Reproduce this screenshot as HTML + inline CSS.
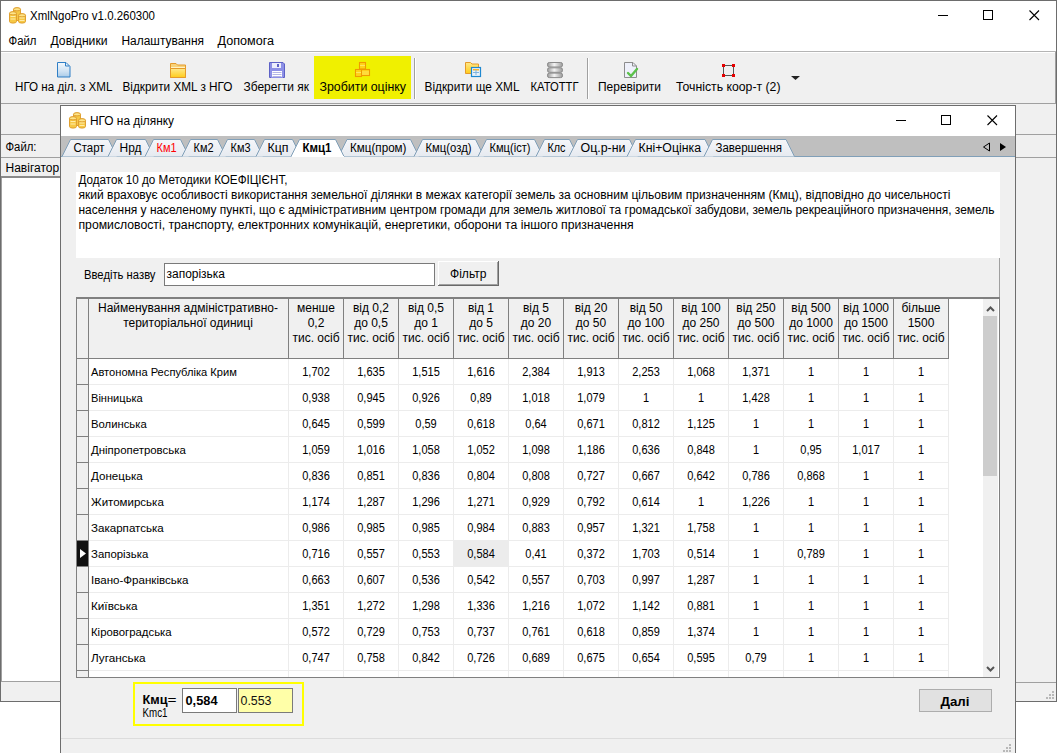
<!DOCTYPE html>
<html><head><meta charset="utf-8"><style>
html,body{margin:0;padding:0;background:#fff;width:1058px;height:753px;overflow:hidden}
svg{display:block}
text{font-family:"Liberation Sans", sans-serif;}
</style></head><body>
<svg width="1058" height="753" viewBox="0 0 1058 753" shape-rendering="crispEdges" font-family='"Liberation Sans", sans-serif'>
<rect x="0" y="0" width="1058" height="753" fill="#ffffff" />
<rect x="0" y="0" width="1057" height="702" fill="#f0f0f0" />
<rect x="0" y="0" width="1057" height="51" fill="#ffffff" />
<rect x="0" y="0" width="1057" height="1" fill="#6d6d6d" />
<rect x="0" y="0" width="1" height="702" fill="#6d6d6d" />
<rect x="1056" y="0" width="1" height="702" fill="#6d6d6d" />
<rect x="0" y="701" width="1057" height="1" fill="#6d6d6d" />
<g transform="translate(9,7)" shape-rendering="geometricPrecision"><path d="M4.5 2.5a3.5 1.6 0 0 1 7 0v11h-7z" fill="#f6c845" stroke="#e0a030"/><ellipse cx="8" cy="2.3" rx="3.5" ry="1.6" fill="#fde58a" stroke="#e0a030"/><path d="M0.5 6.5a3.5 1.6 0 0 1 7 0v8a3.5 1.6 0 0 1 -7 0z" fill="#f6c845" stroke="#e0a030"/><ellipse cx="4" cy="6.3" rx="3.5" ry="1.6" fill="#fde58a" stroke="#e0a030"/><path d="M9.5 8.5a3.5 1.6 0 0 1 7 0v6a3.5 1.6 0 0 1 -7 0z" fill="#f6c845" stroke="#e0a030"/><ellipse cx="13" cy="8.3" rx="3.5" ry="1.6" fill="#fde58a" stroke="#e0a030"/><path d="M1.5 9.5h5M1.5 12h5M10.5 11h5M10.5 13.5h5M8 5v0" stroke="#fff1b8" stroke-width="0.9"/></g>
<text x="30.00" y="20" font-size="12" textLength="125.00" lengthAdjust="spacingAndGlyphs">XmlNgoPro v1.0.260300</text>
<rect x="938" y="15" width="10" height="1" fill="#000" />
<rect x="983" y="10" width="10" height="1" fill="#000" />
<rect x="983" y="19" width="10" height="1" fill="#000" />
<rect x="983" y="10" width="1" height="10" fill="#000" />
<rect x="992" y="10" width="1" height="10" fill="#000" />
<path d="M1029.5 10.5L1039 20M1039 10.5L1029.5 20" stroke="#000" stroke-width="1.1" shape-rendering="geometricPrecision"/>
<rect x="1" y="51" width="1055" height="1" fill="#b4b4b4" />
<text x="8.50" y="45" font-size="12" textLength="28.00" lengthAdjust="spacingAndGlyphs">Файл</text>
<text x="50.50" y="45" font-size="12" textLength="57.00" lengthAdjust="spacingAndGlyphs">Довідники</text>
<text x="121.50" y="45" font-size="12" textLength="82.50" lengthAdjust="spacingAndGlyphs">Налаштування</text>
<text x="217.50" y="45" font-size="12" textLength="56.50" lengthAdjust="spacingAndGlyphs">Допомога</text>
<rect x="1" y="52" width="1055" height="51" fill="#f0f0f0" />
<rect x="1" y="52" width="1055" height="1" fill="#ffffff" />
<rect x="1" y="103" width="1055" height="1" fill="#a0a0a0" />
<rect x="1055" y="52" width="1" height="52" fill="#a0a0a0" />
<rect x="314" y="56" width="97" height="43" fill="#f0f000" />
<rect x="414" y="58" width="1" height="41" fill="#a0a0a0" />
<rect x="415" y="58" width="1" height="41" fill="#ffffff" />
<rect x="587" y="58" width="1" height="41" fill="#a0a0a0" />
<rect x="588" y="58" width="1" height="41" fill="#ffffff" />
<text x="15.00" y="91" font-size="12" textLength="97.50" lengthAdjust="spacingAndGlyphs">НГО на діл. з XML</text>
<text x="122.50" y="91" font-size="12" textLength="110.00" lengthAdjust="spacingAndGlyphs">Відкрити XML з НГО</text>
<text x="243.50" y="91" font-size="12" textLength="65.50" lengthAdjust="spacingAndGlyphs">Зберегти як</text>
<text x="319.50" y="91" font-size="12" textLength="86.50" lengthAdjust="spacingAndGlyphs">Зробити оцінку</text>
<text x="424.50" y="91" font-size="12" textLength="95.00" lengthAdjust="spacingAndGlyphs">Відкрити ще XML</text>
<text x="530.50" y="91" font-size="12" textLength="48.00" lengthAdjust="spacingAndGlyphs">КАТОТТГ</text>
<text x="598.00" y="91" font-size="12" textLength="63.00" lengthAdjust="spacingAndGlyphs">Перевірити</text>
<text x="676.00" y="91" font-size="12" textLength="104.50" lengthAdjust="spacingAndGlyphs">Точність коор-т (2)</text>
<defs><linearGradient id="gdoc" x1="0" y1="0" x2="0" y2="1"><stop offset="0" stop-color="#f4f9fd"/><stop offset="0.6" stop-color="#cfe2f3"/><stop offset="1" stop-color="#a9cbe8"/></linearGradient><linearGradient id="gfold" x1="0" y1="0" x2="0" y2="1"><stop offset="0" stop-color="#ffe98a"/><stop offset="1" stop-color="#ffcc1a"/></linearGradient><linearGradient id="gdb" x1="0" y1="0" x2="1" y2="0"><stop offset="0" stop-color="#9a9a9a"/><stop offset="0.45" stop-color="#f4f4f4"/><stop offset="1" stop-color="#9a9a9a"/></linearGradient></defs>
<g shape-rendering="geometricPrecision"><path d="M57.5 62.5h8.5l4 4v10.5h-12.5z" fill="url(#gdoc)" stroke="#2f7fc6"/><path d="M65.5 62.5v3.5h4" fill="none" stroke="#2f7fc6"/></g>
<g shape-rendering="geometricPrecision"><path d="M170.5 77.5v-14h5.5l1.5 1.5h8v12.5z" fill="#f7d27a" stroke="#e59a2a"/><path d="M170.5 77.5v-9h15v9z" fill="url(#gfold)" stroke="#e59a2a"/><path d="M171 67.5h14" stroke="#fff3c4"/></g>
<g shape-rendering="geometricPrecision"><path d="M269.5 62.5h13.5l1.5 1.5v13.5h-15z" fill="#8d90e6" stroke="#5d61c6"/><rect x="272" y="63" width="9" height="5" fill="#eceefc"/><rect x="277" y="64" width="2" height="3" fill="#5d61c6"/><rect x="271.5" y="70.5" width="11" height="7" fill="#ffffff" stroke="#8d90e6"/><path d="M272.5 72.5h9M272.5 74.5h9M272.5 76.5h9" stroke="#b4b6e6"/></g>
<g shape-rendering="geometricPrecision" stroke="#f09a00" stroke-width="1.1" fill="#ffd21a"><rect x="359.5" y="62.5" width="6" height="6.5"/><rect x="355.5" y="69.5" width="6" height="7"/><rect x="361.5" y="69.5" width="8" height="6"/><path d="M360 65.5h5M356 72.5h5M362 72h7M362 74h7" stroke="#ffe866" stroke-width="0.9"/></g>
<g shape-rendering="geometricPrecision"><path d="M465.5 73.5v-11h5l1.5 1.5h6.5v9.5z" fill="url(#gfold)" stroke="#e59a2a"/><rect x="471.5" y="67.5" width="9" height="9" fill="#e8f2fb" stroke="#1e88d0" stroke-width="1.2"/><rect x="473" y="69" width="6" height="1.5" fill="#f2b430"/><path d="M473 72.5h6M476 70v5" stroke="#7fb3df"/></g>
<g shape-rendering="geometricPrecision"><rect x="547.5" y="62.5" width="15" height="4.5" rx="1.8" fill="url(#gdb)" stroke="#8a8a8a"/><rect x="547.5" y="67.8" width="15" height="4.5" rx="1.8" fill="url(#gdb)" stroke="#8a8a8a"/><rect x="547.5" y="73.1" width="15" height="4.5" rx="1.8" fill="url(#gdb)" stroke="#8a8a8a"/></g>
<g shape-rendering="geometricPrecision"><path d="M624.5 62.5h8.5l3.5 3.5v11.5h-12z" fill="#eef0fa" stroke="#8c8c8c"/><path d="M632.5 62.5v3.5h4" fill="none" stroke="#8c8c8c"/><path d="M628 73l3 3l6-7" fill="none" stroke="#5cc14a" stroke-width="2.4" stroke-linecap="round"/></g>
<g><rect x="723.5" y="65.5" width="10" height="10" fill="none" stroke="#555" shape-rendering="geometricPrecision"/><rect x="722" y="64" width="3" height="3" fill="#e60000"/><rect x="732" y="64" width="3" height="3" fill="#e60000"/><rect x="722" y="74" width="3" height="3" fill="#e60000"/><rect x="732" y="74" width="3" height="3" fill="#e60000"/></g>
<path d="M791 76h9l-4.5 4z" fill="#222" shape-rendering="geometricPrecision"/>
<rect x="1" y="134" width="1055" height="1" fill="#a0a0a0" />
<rect x="1" y="157" width="1055" height="1" fill="#a0a0a0" />
<text x="5.50" y="151" font-size="12" textLength="31.00" lengthAdjust="spacingAndGlyphs">Файл:</text>
<text x="5.50" y="172" font-size="12" textLength="57.00" lengthAdjust="spacingAndGlyphs">Навігатор:</text>
<rect x="1" y="176" width="60" height="2" fill="#8a8a8a" />
<rect x="2" y="178" width="58" height="503" fill="#ffffff" />
<rect x="1" y="178" width="1" height="504" fill="#a0a0a0" />
<rect x="1" y="681" width="60" height="1" fill="#a0a0a0" />
<rect x="1016" y="682" width="40" height="1" fill="#a0a0a0" />
<rect x="60" y="105" width="956" height="648" fill="#f0f0f0" />
<rect x="61" y="106" width="954" height="30" fill="#ffffff" />
<rect x="60" y="105" width="956" height="1" fill="#6d6d6d" />
<rect x="60" y="105" width="1" height="648" fill="#6d6d6d" />
<rect x="1015" y="105" width="1" height="648" fill="#6d6d6d" />
<g transform="translate(69,112)" shape-rendering="geometricPrecision"><path d="M4.5 2.5a3.5 1.6 0 0 1 7 0v11h-7z" fill="#f6c845" stroke="#e0a030"/><ellipse cx="8" cy="2.3" rx="3.5" ry="1.6" fill="#fde58a" stroke="#e0a030"/><path d="M0.5 6.5a3.5 1.6 0 0 1 7 0v8a3.5 1.6 0 0 1 -7 0z" fill="#f6c845" stroke="#e0a030"/><ellipse cx="4" cy="6.3" rx="3.5" ry="1.6" fill="#fde58a" stroke="#e0a030"/><path d="M9.5 8.5a3.5 1.6 0 0 1 7 0v6a3.5 1.6 0 0 1 -7 0z" fill="#f6c845" stroke="#e0a030"/><ellipse cx="13" cy="8.3" rx="3.5" ry="1.6" fill="#fde58a" stroke="#e0a030"/><path d="M1.5 9.5h5M1.5 12h5M10.5 11h5M10.5 13.5h5M8 5v0" stroke="#fff1b8" stroke-width="0.9"/></g>
<text x="90.00" y="125" font-size="12" textLength="84.00" lengthAdjust="spacingAndGlyphs">НГО на ділянку</text>
<rect x="896" y="120" width="10" height="1" fill="#000" />
<rect x="941" y="115" width="10" height="1" fill="#000" />
<rect x="941" y="124" width="10" height="1" fill="#000" />
<rect x="941" y="115" width="1" height="10" fill="#000" />
<rect x="950" y="115" width="1" height="10" fill="#000" />
<path d="M987.5 115.5L997 125M997 115.5L987.5 125" stroke="#000" stroke-width="1.1" shape-rendering="geometricPrecision"/>
<defs><linearGradient id="gtab" x1="0" y1="0" x2="0" y2="1"><stop offset="0" stop-color="#f5f6f9"/><stop offset="1" stop-color="#e6eaf0"/></linearGradient></defs>
<rect x="61" y="136" width="954" height="21" fill="#bfbfbf" />
<rect x="61" y="156" width="954" height="1" fill="#809fb8" />
<path d="M62.0 156.5L70.5 139.5H108.5L117.0 156.5" fill="url(#gtab)" stroke="#809fb8" stroke-width="1" shape-rendering="geometricPrecision"/>
<path d="M108.0 156.5L116.5 139.5H145.5L154.0 156.5" fill="url(#gtab)" stroke="#809fb8" stroke-width="1" shape-rendering="geometricPrecision"/>
<path d="M145.0 156.5L153.5 139.5H180.5L189.0 156.5" fill="url(#gtab)" stroke="#809fb8" stroke-width="1" shape-rendering="geometricPrecision"/>
<path d="M182.0 156.5L190.5 139.5H217.5L226.0 156.5" fill="url(#gtab)" stroke="#809fb8" stroke-width="1" shape-rendering="geometricPrecision"/>
<path d="M219.0 156.5L227.5 139.5H254.5L263.0 156.5" fill="url(#gtab)" stroke="#809fb8" stroke-width="1" shape-rendering="geometricPrecision"/>
<path d="M256.0 156.5L264.5 139.5H292.5L301.0 156.5" fill="url(#gtab)" stroke="#809fb8" stroke-width="1" shape-rendering="geometricPrecision"/>
<path d="M338.5 156.5L347.0 139.5H410.5L419.0 156.5" fill="url(#gtab)" stroke="#809fb8" stroke-width="1" shape-rendering="geometricPrecision"/>
<path d="M414.0 156.5L422.5 139.5H475.5L484.0 156.5" fill="url(#gtab)" stroke="#809fb8" stroke-width="1" shape-rendering="geometricPrecision"/>
<path d="M478.0 156.5L486.5 139.5H534.5L543.0 156.5" fill="url(#gtab)" stroke="#809fb8" stroke-width="1" shape-rendering="geometricPrecision"/>
<path d="M536.0 156.5L544.5 139.5H569.5L578.0 156.5" fill="url(#gtab)" stroke="#809fb8" stroke-width="1" shape-rendering="geometricPrecision"/>
<path d="M569.0 156.5L577.5 139.5H629.5L638.0 156.5" fill="url(#gtab)" stroke="#809fb8" stroke-width="1" shape-rendering="geometricPrecision"/>
<path d="M627.0 156.5L635.5 139.5H705.0L713.5 156.5" fill="url(#gtab)" stroke="#809fb8" stroke-width="1" shape-rendering="geometricPrecision"/>
<path d="M704.0 156.5L712.5 139.5H786.0L794.5 156.5" fill="url(#gtab)" stroke="#809fb8" stroke-width="1" shape-rendering="geometricPrecision"/>
<path d="M291.0 156.5L299.5 139.5H335.5L344.0 156.5" fill="#ffffff" stroke="#809fb8" stroke-width="1" shape-rendering="geometricPrecision"/>
<rect x="292.0" y="156" width="52.0" height="1" fill="#ffffff" />
<text x="73.50" y="152" font-size="12" textLength="31.00" lengthAdjust="spacingAndGlyphs">Старт</text>
<text x="119.50" y="152" font-size="12" textLength="22.00" lengthAdjust="spacingAndGlyphs">Нрд</text>
<text x="156.50" y="152" font-size="12" fill="#ff0000" textLength="20.00" lengthAdjust="spacingAndGlyphs">Км1</text>
<text x="193.50" y="152" font-size="12" textLength="20.00" lengthAdjust="spacingAndGlyphs">Км2</text>
<text x="230.50" y="152" font-size="12" textLength="20.00" lengthAdjust="spacingAndGlyphs">Км3</text>
<text x="267.50" y="152" font-size="12" textLength="21.00" lengthAdjust="spacingAndGlyphs">Кцп</text>
<text x="302.50" y="152" font-size="12" font-weight="bold" textLength="29.00" lengthAdjust="spacingAndGlyphs">Кмц1</text>
<text x="350.00" y="152" font-size="12" textLength="56.50" lengthAdjust="spacingAndGlyphs">Кмц(пром)</text>
<text x="425.50" y="152" font-size="12" textLength="46.00" lengthAdjust="spacingAndGlyphs">Кмц(озд)</text>
<text x="489.50" y="152" font-size="12" textLength="41.00" lengthAdjust="spacingAndGlyphs">Кмц(іст)</text>
<text x="547.50" y="152" font-size="12" textLength="18.00" lengthAdjust="spacingAndGlyphs">Клс</text>
<text x="580.50" y="152" font-size="12" textLength="45.00" lengthAdjust="spacingAndGlyphs">Оц.р-ни</text>
<text x="638.50" y="152" font-size="12" textLength="62.50" lengthAdjust="spacingAndGlyphs">Кні+Оцінка</text>
<text x="715.50" y="152" font-size="12" textLength="66.50" lengthAdjust="spacingAndGlyphs">Завершення</text>
<path d="M983.5 147L989.5 143V151Z" fill="none" stroke="#000" shape-rendering="geometricPrecision"/>
<path d="M1000 143L1006 147L1000 151Z" fill="#000" shape-rendering="geometricPrecision"/>
<rect x="76" y="172" width="924" height="86" fill="#ffffff" />
<text x="78.50" y="184" font-size="12" textLength="209.00" lengthAdjust="spacingAndGlyphs">Додаток 10 до Методики КОЕФІЦІЄНТ,</text>
<text x="78.50" y="199" font-size="12" textLength="872.00" lengthAdjust="spacingAndGlyphs">який враховує особливості використання земельної ділянки в межах категорії земель за основним цільовим призначенням (Кмц), відповідно до чисельності</text>
<text x="78.50" y="214" font-size="12" textLength="916.00" lengthAdjust="spacingAndGlyphs">населення у населеному пункті, що є адміністративним центром громади для земель житлової та громадської забудови, земель рекреаційного призначення, земель</text>
<text x="78.50" y="229" font-size="12" textLength="555.00" lengthAdjust="spacingAndGlyphs">промисловості, транспорту, електронних комунікацій, енергетики, оборони та іншого призначення</text>
<rect x="999" y="258" width="1" height="40" fill="#a0a0a0" />
<text x="84.00" y="279" font-size="12" textLength="71.50" lengthAdjust="spacingAndGlyphs">Введіть назву</text>
<rect x="164" y="263" width="271" height="23" fill="#ffffff" />
<rect x="164" y="263" width="271" height="1" fill="#7a7a7a" />
<rect x="164" y="285" width="271" height="1" fill="#7a7a7a" />
<rect x="164" y="263" width="1" height="23" fill="#7a7a7a" />
<rect x="434" y="263" width="1" height="23" fill="#7a7a7a" />
<text x="166.50" y="278" font-size="12" textLength="58.50" lengthAdjust="spacingAndGlyphs">запорізька</text>
<rect x="438" y="261" width="61" height="25" fill="#f0f0f0" />
<rect x="438" y="261" width="61" height="1" fill="#ffffff" />
<rect x="438" y="261" width="1" height="25" fill="#ffffff" />
<rect x="438" y="285" width="61" height="1" fill="#696969" />
<rect x="498" y="261" width="1" height="25" fill="#696969" />
<rect x="439" y="284" width="59" height="1" fill="#a0a0a0" />
<rect x="497" y="262" width="1" height="23" fill="#a0a0a0" />
<text x="450.00" y="278" font-size="12" textLength="36.50" lengthAdjust="spacingAndGlyphs">Фільтр</text>
<rect x="76" y="298" width="924" height="380" fill="#ffffff" />
<rect x="77" y="299" width="871" height="59" fill="#f0f0f0" />
<rect x="88" y="299" width="1" height="59" fill="#808080" />
<rect x="288" y="299" width="1" height="59" fill="#808080" />
<rect x="343" y="299" width="1" height="59" fill="#808080" />
<rect x="398" y="299" width="1" height="59" fill="#808080" />
<rect x="453" y="299" width="1" height="59" fill="#808080" />
<rect x="508" y="299" width="1" height="59" fill="#808080" />
<rect x="563" y="299" width="1" height="59" fill="#808080" />
<rect x="618" y="299" width="1" height="59" fill="#808080" />
<rect x="673" y="299" width="1" height="59" fill="#808080" />
<rect x="728" y="299" width="1" height="59" fill="#808080" />
<rect x="783" y="299" width="1" height="59" fill="#808080" />
<rect x="838" y="299" width="1" height="59" fill="#808080" />
<rect x="893" y="299" width="1" height="59" fill="#808080" />
<rect x="948" y="299" width="1" height="59" fill="#808080" />
<rect x="77" y="358" width="872" height="1" fill="#808080" />
<rect x="76" y="297" width="924" height="2" fill="#808080" />
<rect x="76" y="298" width="1" height="380" fill="#808080" />
<rect x="999" y="298" width="1" height="380" fill="#808080" />
<rect x="76" y="677" width="924" height="1" fill="#808080" />
<text x="188.00" y="312" font-size="12" text-anchor="middle" textLength="179.93" lengthAdjust="spacingAndGlyphs">Найменування адміністративно-</text>
<text x="188.00" y="327" font-size="12" text-anchor="middle" textLength="129.67" lengthAdjust="spacingAndGlyphs">територіальної одиниці</text>
<text x="316.00" y="312" font-size="12" text-anchor="middle" textLength="37.85" lengthAdjust="spacingAndGlyphs">менше</text>
<text x="316.00" y="327" font-size="12" text-anchor="middle" textLength="16.68" lengthAdjust="spacingAndGlyphs">0,2</text>
<text x="316.00" y="342" font-size="12" text-anchor="middle" textLength="47.08" lengthAdjust="spacingAndGlyphs">тис. осіб</text>
<text x="371.00" y="312" font-size="12" text-anchor="middle" textLength="36.06" lengthAdjust="spacingAndGlyphs">від 0,2</text>
<text x="371.00" y="327" font-size="12" text-anchor="middle" textLength="33.69" lengthAdjust="spacingAndGlyphs">до 0,5</text>
<text x="371.00" y="342" font-size="12" text-anchor="middle" textLength="47.08" lengthAdjust="spacingAndGlyphs">тис. осіб</text>
<text x="426.00" y="312" font-size="12" text-anchor="middle" textLength="36.06" lengthAdjust="spacingAndGlyphs">від 0,5</text>
<text x="426.00" y="327" font-size="12" text-anchor="middle" textLength="23.68" lengthAdjust="spacingAndGlyphs">до 1</text>
<text x="426.00" y="342" font-size="12" text-anchor="middle" textLength="47.08" lengthAdjust="spacingAndGlyphs">тис. осіб</text>
<text x="481.00" y="312" font-size="12" text-anchor="middle" textLength="26.05" lengthAdjust="spacingAndGlyphs">від 1</text>
<text x="481.00" y="327" font-size="12" text-anchor="middle" textLength="23.68" lengthAdjust="spacingAndGlyphs">до 5</text>
<text x="481.00" y="342" font-size="12" text-anchor="middle" textLength="47.08" lengthAdjust="spacingAndGlyphs">тис. осіб</text>
<text x="536.00" y="312" font-size="12" text-anchor="middle" textLength="26.05" lengthAdjust="spacingAndGlyphs">від 5</text>
<text x="536.00" y="327" font-size="12" text-anchor="middle" textLength="30.36" lengthAdjust="spacingAndGlyphs">до 20</text>
<text x="536.00" y="342" font-size="12" text-anchor="middle" textLength="47.08" lengthAdjust="spacingAndGlyphs">тис. осіб</text>
<text x="591.00" y="312" font-size="12" text-anchor="middle" textLength="32.72" lengthAdjust="spacingAndGlyphs">від 20</text>
<text x="591.00" y="327" font-size="12" text-anchor="middle" textLength="30.36" lengthAdjust="spacingAndGlyphs">до 50</text>
<text x="591.00" y="342" font-size="12" text-anchor="middle" textLength="47.08" lengthAdjust="spacingAndGlyphs">тис. осіб</text>
<text x="646.00" y="312" font-size="12" text-anchor="middle" textLength="32.72" lengthAdjust="spacingAndGlyphs">від 50</text>
<text x="646.00" y="327" font-size="12" text-anchor="middle" textLength="37.03" lengthAdjust="spacingAndGlyphs">до 100</text>
<text x="646.00" y="342" font-size="12" text-anchor="middle" textLength="47.08" lengthAdjust="spacingAndGlyphs">тис. осіб</text>
<text x="701.00" y="312" font-size="12" text-anchor="middle" textLength="39.40" lengthAdjust="spacingAndGlyphs">від 100</text>
<text x="701.00" y="327" font-size="12" text-anchor="middle" textLength="37.03" lengthAdjust="spacingAndGlyphs">до 250</text>
<text x="701.00" y="342" font-size="12" text-anchor="middle" textLength="47.08" lengthAdjust="spacingAndGlyphs">тис. осіб</text>
<text x="756.00" y="312" font-size="12" text-anchor="middle" textLength="39.40" lengthAdjust="spacingAndGlyphs">від 250</text>
<text x="756.00" y="327" font-size="12" text-anchor="middle" textLength="37.03" lengthAdjust="spacingAndGlyphs">до 500</text>
<text x="756.00" y="342" font-size="12" text-anchor="middle" textLength="47.08" lengthAdjust="spacingAndGlyphs">тис. осіб</text>
<text x="811.00" y="312" font-size="12" text-anchor="middle" textLength="39.40" lengthAdjust="spacingAndGlyphs">від 500</text>
<text x="811.00" y="327" font-size="12" text-anchor="middle" textLength="43.71" lengthAdjust="spacingAndGlyphs">до 1000</text>
<text x="811.00" y="342" font-size="12" text-anchor="middle" textLength="47.08" lengthAdjust="spacingAndGlyphs">тис. осіб</text>
<text x="866.00" y="312" font-size="12" text-anchor="middle" textLength="46.07" lengthAdjust="spacingAndGlyphs">від 1000</text>
<text x="866.00" y="327" font-size="12" text-anchor="middle" textLength="43.71" lengthAdjust="spacingAndGlyphs">до 1500</text>
<text x="866.00" y="342" font-size="12" text-anchor="middle" textLength="47.08" lengthAdjust="spacingAndGlyphs">тис. осіб</text>
<text x="921.00" y="312" font-size="12" text-anchor="middle" textLength="39.09" lengthAdjust="spacingAndGlyphs">більше</text>
<text x="921.00" y="327" font-size="12" text-anchor="middle" textLength="26.70" lengthAdjust="spacingAndGlyphs">1500</text>
<text x="921.00" y="342" font-size="12" text-anchor="middle" textLength="47.08" lengthAdjust="spacingAndGlyphs">тис. осіб</text>
<rect x="454" y="541" width="54" height="25" fill="#ececec" />
<rect x="77" y="359" width="11" height="26" fill="#f0f0f0" />
<rect x="88" y="359" width="1" height="26" fill="#808080" />
<rect x="77" y="384" width="11" height="1" fill="#808080" />
<rect x="89" y="384" width="860" height="1" fill="#ececec" />
<rect x="288" y="359" width="1" height="26" fill="#ececec" />
<rect x="343" y="359" width="1" height="26" fill="#ececec" />
<rect x="398" y="359" width="1" height="26" fill="#ececec" />
<rect x="453" y="359" width="1" height="26" fill="#ececec" />
<rect x="508" y="359" width="1" height="26" fill="#ececec" />
<rect x="563" y="359" width="1" height="26" fill="#ececec" />
<rect x="618" y="359" width="1" height="26" fill="#ececec" />
<rect x="673" y="359" width="1" height="26" fill="#ececec" />
<rect x="728" y="359" width="1" height="26" fill="#ececec" />
<rect x="783" y="359" width="1" height="26" fill="#ececec" />
<rect x="838" y="359" width="1" height="26" fill="#ececec" />
<rect x="893" y="359" width="1" height="26" fill="#ececec" />
<rect x="948" y="359" width="1" height="26" fill="#ececec" />
<rect x="77" y="385" width="11" height="26" fill="#f0f0f0" />
<rect x="88" y="385" width="1" height="26" fill="#808080" />
<rect x="77" y="410" width="11" height="1" fill="#808080" />
<rect x="89" y="410" width="860" height="1" fill="#ececec" />
<rect x="288" y="385" width="1" height="26" fill="#ececec" />
<rect x="343" y="385" width="1" height="26" fill="#ececec" />
<rect x="398" y="385" width="1" height="26" fill="#ececec" />
<rect x="453" y="385" width="1" height="26" fill="#ececec" />
<rect x="508" y="385" width="1" height="26" fill="#ececec" />
<rect x="563" y="385" width="1" height="26" fill="#ececec" />
<rect x="618" y="385" width="1" height="26" fill="#ececec" />
<rect x="673" y="385" width="1" height="26" fill="#ececec" />
<rect x="728" y="385" width="1" height="26" fill="#ececec" />
<rect x="783" y="385" width="1" height="26" fill="#ececec" />
<rect x="838" y="385" width="1" height="26" fill="#ececec" />
<rect x="893" y="385" width="1" height="26" fill="#ececec" />
<rect x="948" y="385" width="1" height="26" fill="#ececec" />
<rect x="77" y="411" width="11" height="26" fill="#f0f0f0" />
<rect x="88" y="411" width="1" height="26" fill="#808080" />
<rect x="77" y="436" width="11" height="1" fill="#808080" />
<rect x="89" y="436" width="860" height="1" fill="#ececec" />
<rect x="288" y="411" width="1" height="26" fill="#ececec" />
<rect x="343" y="411" width="1" height="26" fill="#ececec" />
<rect x="398" y="411" width="1" height="26" fill="#ececec" />
<rect x="453" y="411" width="1" height="26" fill="#ececec" />
<rect x="508" y="411" width="1" height="26" fill="#ececec" />
<rect x="563" y="411" width="1" height="26" fill="#ececec" />
<rect x="618" y="411" width="1" height="26" fill="#ececec" />
<rect x="673" y="411" width="1" height="26" fill="#ececec" />
<rect x="728" y="411" width="1" height="26" fill="#ececec" />
<rect x="783" y="411" width="1" height="26" fill="#ececec" />
<rect x="838" y="411" width="1" height="26" fill="#ececec" />
<rect x="893" y="411" width="1" height="26" fill="#ececec" />
<rect x="948" y="411" width="1" height="26" fill="#ececec" />
<rect x="77" y="437" width="11" height="26" fill="#f0f0f0" />
<rect x="88" y="437" width="1" height="26" fill="#808080" />
<rect x="77" y="462" width="11" height="1" fill="#808080" />
<rect x="89" y="462" width="860" height="1" fill="#ececec" />
<rect x="288" y="437" width="1" height="26" fill="#ececec" />
<rect x="343" y="437" width="1" height="26" fill="#ececec" />
<rect x="398" y="437" width="1" height="26" fill="#ececec" />
<rect x="453" y="437" width="1" height="26" fill="#ececec" />
<rect x="508" y="437" width="1" height="26" fill="#ececec" />
<rect x="563" y="437" width="1" height="26" fill="#ececec" />
<rect x="618" y="437" width="1" height="26" fill="#ececec" />
<rect x="673" y="437" width="1" height="26" fill="#ececec" />
<rect x="728" y="437" width="1" height="26" fill="#ececec" />
<rect x="783" y="437" width="1" height="26" fill="#ececec" />
<rect x="838" y="437" width="1" height="26" fill="#ececec" />
<rect x="893" y="437" width="1" height="26" fill="#ececec" />
<rect x="948" y="437" width="1" height="26" fill="#ececec" />
<rect x="77" y="463" width="11" height="26" fill="#f0f0f0" />
<rect x="88" y="463" width="1" height="26" fill="#808080" />
<rect x="77" y="488" width="11" height="1" fill="#808080" />
<rect x="89" y="488" width="860" height="1" fill="#ececec" />
<rect x="288" y="463" width="1" height="26" fill="#ececec" />
<rect x="343" y="463" width="1" height="26" fill="#ececec" />
<rect x="398" y="463" width="1" height="26" fill="#ececec" />
<rect x="453" y="463" width="1" height="26" fill="#ececec" />
<rect x="508" y="463" width="1" height="26" fill="#ececec" />
<rect x="563" y="463" width="1" height="26" fill="#ececec" />
<rect x="618" y="463" width="1" height="26" fill="#ececec" />
<rect x="673" y="463" width="1" height="26" fill="#ececec" />
<rect x="728" y="463" width="1" height="26" fill="#ececec" />
<rect x="783" y="463" width="1" height="26" fill="#ececec" />
<rect x="838" y="463" width="1" height="26" fill="#ececec" />
<rect x="893" y="463" width="1" height="26" fill="#ececec" />
<rect x="948" y="463" width="1" height="26" fill="#ececec" />
<rect x="77" y="489" width="11" height="26" fill="#f0f0f0" />
<rect x="88" y="489" width="1" height="26" fill="#808080" />
<rect x="77" y="514" width="11" height="1" fill="#808080" />
<rect x="89" y="514" width="860" height="1" fill="#ececec" />
<rect x="288" y="489" width="1" height="26" fill="#ececec" />
<rect x="343" y="489" width="1" height="26" fill="#ececec" />
<rect x="398" y="489" width="1" height="26" fill="#ececec" />
<rect x="453" y="489" width="1" height="26" fill="#ececec" />
<rect x="508" y="489" width="1" height="26" fill="#ececec" />
<rect x="563" y="489" width="1" height="26" fill="#ececec" />
<rect x="618" y="489" width="1" height="26" fill="#ececec" />
<rect x="673" y="489" width="1" height="26" fill="#ececec" />
<rect x="728" y="489" width="1" height="26" fill="#ececec" />
<rect x="783" y="489" width="1" height="26" fill="#ececec" />
<rect x="838" y="489" width="1" height="26" fill="#ececec" />
<rect x="893" y="489" width="1" height="26" fill="#ececec" />
<rect x="948" y="489" width="1" height="26" fill="#ececec" />
<rect x="77" y="515" width="11" height="26" fill="#f0f0f0" />
<rect x="88" y="515" width="1" height="26" fill="#808080" />
<rect x="77" y="540" width="11" height="1" fill="#808080" />
<rect x="89" y="540" width="860" height="1" fill="#ececec" />
<rect x="288" y="515" width="1" height="26" fill="#ececec" />
<rect x="343" y="515" width="1" height="26" fill="#ececec" />
<rect x="398" y="515" width="1" height="26" fill="#ececec" />
<rect x="453" y="515" width="1" height="26" fill="#ececec" />
<rect x="508" y="515" width="1" height="26" fill="#ececec" />
<rect x="563" y="515" width="1" height="26" fill="#ececec" />
<rect x="618" y="515" width="1" height="26" fill="#ececec" />
<rect x="673" y="515" width="1" height="26" fill="#ececec" />
<rect x="728" y="515" width="1" height="26" fill="#ececec" />
<rect x="783" y="515" width="1" height="26" fill="#ececec" />
<rect x="838" y="515" width="1" height="26" fill="#ececec" />
<rect x="893" y="515" width="1" height="26" fill="#ececec" />
<rect x="948" y="515" width="1" height="26" fill="#ececec" />
<rect x="77" y="541" width="11" height="26" fill="#f0f0f0" />
<rect x="88" y="541" width="1" height="26" fill="#808080" />
<rect x="77" y="566" width="11" height="1" fill="#808080" />
<rect x="89" y="566" width="860" height="1" fill="#ececec" />
<rect x="288" y="541" width="1" height="26" fill="#ececec" />
<rect x="343" y="541" width="1" height="26" fill="#ececec" />
<rect x="398" y="541" width="1" height="26" fill="#ececec" />
<rect x="453" y="541" width="1" height="26" fill="#ececec" />
<rect x="508" y="541" width="1" height="26" fill="#ececec" />
<rect x="563" y="541" width="1" height="26" fill="#ececec" />
<rect x="618" y="541" width="1" height="26" fill="#ececec" />
<rect x="673" y="541" width="1" height="26" fill="#ececec" />
<rect x="728" y="541" width="1" height="26" fill="#ececec" />
<rect x="783" y="541" width="1" height="26" fill="#ececec" />
<rect x="838" y="541" width="1" height="26" fill="#ececec" />
<rect x="893" y="541" width="1" height="26" fill="#ececec" />
<rect x="948" y="541" width="1" height="26" fill="#ececec" />
<rect x="77" y="567" width="11" height="26" fill="#f0f0f0" />
<rect x="88" y="567" width="1" height="26" fill="#808080" />
<rect x="77" y="592" width="11" height="1" fill="#808080" />
<rect x="89" y="592" width="860" height="1" fill="#ececec" />
<rect x="288" y="567" width="1" height="26" fill="#ececec" />
<rect x="343" y="567" width="1" height="26" fill="#ececec" />
<rect x="398" y="567" width="1" height="26" fill="#ececec" />
<rect x="453" y="567" width="1" height="26" fill="#ececec" />
<rect x="508" y="567" width="1" height="26" fill="#ececec" />
<rect x="563" y="567" width="1" height="26" fill="#ececec" />
<rect x="618" y="567" width="1" height="26" fill="#ececec" />
<rect x="673" y="567" width="1" height="26" fill="#ececec" />
<rect x="728" y="567" width="1" height="26" fill="#ececec" />
<rect x="783" y="567" width="1" height="26" fill="#ececec" />
<rect x="838" y="567" width="1" height="26" fill="#ececec" />
<rect x="893" y="567" width="1" height="26" fill="#ececec" />
<rect x="948" y="567" width="1" height="26" fill="#ececec" />
<rect x="77" y="593" width="11" height="26" fill="#f0f0f0" />
<rect x="88" y="593" width="1" height="26" fill="#808080" />
<rect x="77" y="618" width="11" height="1" fill="#808080" />
<rect x="89" y="618" width="860" height="1" fill="#ececec" />
<rect x="288" y="593" width="1" height="26" fill="#ececec" />
<rect x="343" y="593" width="1" height="26" fill="#ececec" />
<rect x="398" y="593" width="1" height="26" fill="#ececec" />
<rect x="453" y="593" width="1" height="26" fill="#ececec" />
<rect x="508" y="593" width="1" height="26" fill="#ececec" />
<rect x="563" y="593" width="1" height="26" fill="#ececec" />
<rect x="618" y="593" width="1" height="26" fill="#ececec" />
<rect x="673" y="593" width="1" height="26" fill="#ececec" />
<rect x="728" y="593" width="1" height="26" fill="#ececec" />
<rect x="783" y="593" width="1" height="26" fill="#ececec" />
<rect x="838" y="593" width="1" height="26" fill="#ececec" />
<rect x="893" y="593" width="1" height="26" fill="#ececec" />
<rect x="948" y="593" width="1" height="26" fill="#ececec" />
<rect x="77" y="619" width="11" height="26" fill="#f0f0f0" />
<rect x="88" y="619" width="1" height="26" fill="#808080" />
<rect x="77" y="644" width="11" height="1" fill="#808080" />
<rect x="89" y="644" width="860" height="1" fill="#ececec" />
<rect x="288" y="619" width="1" height="26" fill="#ececec" />
<rect x="343" y="619" width="1" height="26" fill="#ececec" />
<rect x="398" y="619" width="1" height="26" fill="#ececec" />
<rect x="453" y="619" width="1" height="26" fill="#ececec" />
<rect x="508" y="619" width="1" height="26" fill="#ececec" />
<rect x="563" y="619" width="1" height="26" fill="#ececec" />
<rect x="618" y="619" width="1" height="26" fill="#ececec" />
<rect x="673" y="619" width="1" height="26" fill="#ececec" />
<rect x="728" y="619" width="1" height="26" fill="#ececec" />
<rect x="783" y="619" width="1" height="26" fill="#ececec" />
<rect x="838" y="619" width="1" height="26" fill="#ececec" />
<rect x="893" y="619" width="1" height="26" fill="#ececec" />
<rect x="948" y="619" width="1" height="26" fill="#ececec" />
<rect x="77" y="645" width="11" height="26" fill="#f0f0f0" />
<rect x="88" y="645" width="1" height="26" fill="#808080" />
<rect x="77" y="670" width="11" height="1" fill="#808080" />
<rect x="89" y="670" width="860" height="1" fill="#ececec" />
<rect x="288" y="645" width="1" height="26" fill="#ececec" />
<rect x="343" y="645" width="1" height="26" fill="#ececec" />
<rect x="398" y="645" width="1" height="26" fill="#ececec" />
<rect x="453" y="645" width="1" height="26" fill="#ececec" />
<rect x="508" y="645" width="1" height="26" fill="#ececec" />
<rect x="563" y="645" width="1" height="26" fill="#ececec" />
<rect x="618" y="645" width="1" height="26" fill="#ececec" />
<rect x="673" y="645" width="1" height="26" fill="#ececec" />
<rect x="728" y="645" width="1" height="26" fill="#ececec" />
<rect x="783" y="645" width="1" height="26" fill="#ececec" />
<rect x="838" y="645" width="1" height="26" fill="#ececec" />
<rect x="893" y="645" width="1" height="26" fill="#ececec" />
<rect x="948" y="645" width="1" height="26" fill="#ececec" />
<rect x="77" y="671" width="11" height="6" fill="#f0f0f0" />
<rect x="88" y="671" width="1" height="6" fill="#808080" />
<rect x="288" y="671" width="1" height="6" fill="#ececec" />
<rect x="343" y="671" width="1" height="6" fill="#ececec" />
<rect x="398" y="671" width="1" height="6" fill="#ececec" />
<rect x="453" y="671" width="1" height="6" fill="#ececec" />
<rect x="508" y="671" width="1" height="6" fill="#ececec" />
<rect x="563" y="671" width="1" height="6" fill="#ececec" />
<rect x="618" y="671" width="1" height="6" fill="#ececec" />
<rect x="673" y="671" width="1" height="6" fill="#ececec" />
<rect x="728" y="671" width="1" height="6" fill="#ececec" />
<rect x="783" y="671" width="1" height="6" fill="#ececec" />
<rect x="838" y="671" width="1" height="6" fill="#ececec" />
<rect x="893" y="671" width="1" height="6" fill="#ececec" />
<rect x="948" y="671" width="1" height="6" fill="#ececec" />
<rect x="77" y="541" width="11" height="25" fill="#111111" />
<path d="M80 549L86 553.5L80 558Z" fill="#fff" shape-rendering="geometricPrecision"/>
<text x="91.00" y="376" font-size="11" textLength="145.90" lengthAdjust="spacingAndGlyphs">Автономна Республіка Крим</text>
<text x="316.00" y="376" font-size="12" text-anchor="middle" textLength="27.53" lengthAdjust="spacingAndGlyphs">1,702</text>
<text x="371.00" y="376" font-size="12" text-anchor="middle" textLength="27.53" lengthAdjust="spacingAndGlyphs">1,635</text>
<text x="426.00" y="376" font-size="12" text-anchor="middle" textLength="27.53" lengthAdjust="spacingAndGlyphs">1,515</text>
<text x="481.00" y="376" font-size="12" text-anchor="middle" textLength="27.53" lengthAdjust="spacingAndGlyphs">1,616</text>
<text x="536.00" y="376" font-size="12" text-anchor="middle" textLength="27.53" lengthAdjust="spacingAndGlyphs">2,384</text>
<text x="591.00" y="376" font-size="12" text-anchor="middle" textLength="27.53" lengthAdjust="spacingAndGlyphs">1,913</text>
<text x="646.00" y="376" font-size="12" text-anchor="middle" textLength="27.53" lengthAdjust="spacingAndGlyphs">2,253</text>
<text x="701.00" y="376" font-size="12" text-anchor="middle" textLength="27.53" lengthAdjust="spacingAndGlyphs">1,068</text>
<text x="756.00" y="376" font-size="12" text-anchor="middle" textLength="27.53" lengthAdjust="spacingAndGlyphs">1,371</text>
<text x="811.00" y="376" font-size="12" text-anchor="middle" textLength="6.12" lengthAdjust="spacingAndGlyphs">1</text>
<text x="866.00" y="376" font-size="12" text-anchor="middle" textLength="6.12" lengthAdjust="spacingAndGlyphs">1</text>
<text x="921.00" y="376" font-size="12" text-anchor="middle" textLength="6.12" lengthAdjust="spacingAndGlyphs">1</text>
<text x="91.00" y="402" font-size="11" textLength="51.70" lengthAdjust="spacingAndGlyphs">Вінницька</text>
<text x="316.00" y="402" font-size="12" text-anchor="middle" textLength="27.53" lengthAdjust="spacingAndGlyphs">0,938</text>
<text x="371.00" y="402" font-size="12" text-anchor="middle" textLength="27.53" lengthAdjust="spacingAndGlyphs">0,945</text>
<text x="426.00" y="402" font-size="12" text-anchor="middle" textLength="27.53" lengthAdjust="spacingAndGlyphs">0,926</text>
<text x="481.00" y="402" font-size="12" text-anchor="middle" textLength="21.41" lengthAdjust="spacingAndGlyphs">0,89</text>
<text x="536.00" y="402" font-size="12" text-anchor="middle" textLength="27.53" lengthAdjust="spacingAndGlyphs">1,018</text>
<text x="591.00" y="402" font-size="12" text-anchor="middle" textLength="27.53" lengthAdjust="spacingAndGlyphs">1,079</text>
<text x="646.00" y="402" font-size="12" text-anchor="middle" textLength="6.12" lengthAdjust="spacingAndGlyphs">1</text>
<text x="701.00" y="402" font-size="12" text-anchor="middle" textLength="6.12" lengthAdjust="spacingAndGlyphs">1</text>
<text x="756.00" y="402" font-size="12" text-anchor="middle" textLength="27.53" lengthAdjust="spacingAndGlyphs">1,428</text>
<text x="811.00" y="402" font-size="12" text-anchor="middle" textLength="6.12" lengthAdjust="spacingAndGlyphs">1</text>
<text x="866.00" y="402" font-size="12" text-anchor="middle" textLength="6.12" lengthAdjust="spacingAndGlyphs">1</text>
<text x="921.00" y="402" font-size="12" text-anchor="middle" textLength="6.12" lengthAdjust="spacingAndGlyphs">1</text>
<text x="91.00" y="428" font-size="11" textLength="55.70" lengthAdjust="spacingAndGlyphs">Волинська</text>
<text x="316.00" y="428" font-size="12" text-anchor="middle" textLength="27.53" lengthAdjust="spacingAndGlyphs">0,645</text>
<text x="371.00" y="428" font-size="12" text-anchor="middle" textLength="27.53" lengthAdjust="spacingAndGlyphs">0,599</text>
<text x="426.00" y="428" font-size="12" text-anchor="middle" textLength="21.41" lengthAdjust="spacingAndGlyphs">0,59</text>
<text x="481.00" y="428" font-size="12" text-anchor="middle" textLength="27.53" lengthAdjust="spacingAndGlyphs">0,618</text>
<text x="536.00" y="428" font-size="12" text-anchor="middle" textLength="21.41" lengthAdjust="spacingAndGlyphs">0,64</text>
<text x="591.00" y="428" font-size="12" text-anchor="middle" textLength="27.53" lengthAdjust="spacingAndGlyphs">0,671</text>
<text x="646.00" y="428" font-size="12" text-anchor="middle" textLength="27.53" lengthAdjust="spacingAndGlyphs">0,812</text>
<text x="701.00" y="428" font-size="12" text-anchor="middle" textLength="27.53" lengthAdjust="spacingAndGlyphs">1,125</text>
<text x="756.00" y="428" font-size="12" text-anchor="middle" textLength="6.12" lengthAdjust="spacingAndGlyphs">1</text>
<text x="811.00" y="428" font-size="12" text-anchor="middle" textLength="6.12" lengthAdjust="spacingAndGlyphs">1</text>
<text x="866.00" y="428" font-size="12" text-anchor="middle" textLength="6.12" lengthAdjust="spacingAndGlyphs">1</text>
<text x="921.00" y="428" font-size="12" text-anchor="middle" textLength="6.12" lengthAdjust="spacingAndGlyphs">1</text>
<text x="91.00" y="454" font-size="11" textLength="94.80" lengthAdjust="spacingAndGlyphs">Дніпропетровська</text>
<text x="316.00" y="454" font-size="12" text-anchor="middle" textLength="27.53" lengthAdjust="spacingAndGlyphs">1,059</text>
<text x="371.00" y="454" font-size="12" text-anchor="middle" textLength="27.53" lengthAdjust="spacingAndGlyphs">1,016</text>
<text x="426.00" y="454" font-size="12" text-anchor="middle" textLength="27.53" lengthAdjust="spacingAndGlyphs">1,058</text>
<text x="481.00" y="454" font-size="12" text-anchor="middle" textLength="27.53" lengthAdjust="spacingAndGlyphs">1,052</text>
<text x="536.00" y="454" font-size="12" text-anchor="middle" textLength="27.53" lengthAdjust="spacingAndGlyphs">1,098</text>
<text x="591.00" y="454" font-size="12" text-anchor="middle" textLength="27.53" lengthAdjust="spacingAndGlyphs">1,186</text>
<text x="646.00" y="454" font-size="12" text-anchor="middle" textLength="27.53" lengthAdjust="spacingAndGlyphs">0,636</text>
<text x="701.00" y="454" font-size="12" text-anchor="middle" textLength="27.53" lengthAdjust="spacingAndGlyphs">0,848</text>
<text x="756.00" y="454" font-size="12" text-anchor="middle" textLength="6.12" lengthAdjust="spacingAndGlyphs">1</text>
<text x="811.00" y="454" font-size="12" text-anchor="middle" textLength="21.41" lengthAdjust="spacingAndGlyphs">0,95</text>
<text x="866.00" y="454" font-size="12" text-anchor="middle" textLength="27.53" lengthAdjust="spacingAndGlyphs">1,017</text>
<text x="921.00" y="454" font-size="12" text-anchor="middle" textLength="6.12" lengthAdjust="spacingAndGlyphs">1</text>
<text x="91.00" y="480" font-size="11" textLength="51.70" lengthAdjust="spacingAndGlyphs">Донецька</text>
<text x="316.00" y="480" font-size="12" text-anchor="middle" textLength="27.53" lengthAdjust="spacingAndGlyphs">0,836</text>
<text x="371.00" y="480" font-size="12" text-anchor="middle" textLength="27.53" lengthAdjust="spacingAndGlyphs">0,851</text>
<text x="426.00" y="480" font-size="12" text-anchor="middle" textLength="27.53" lengthAdjust="spacingAndGlyphs">0,836</text>
<text x="481.00" y="480" font-size="12" text-anchor="middle" textLength="27.53" lengthAdjust="spacingAndGlyphs">0,804</text>
<text x="536.00" y="480" font-size="12" text-anchor="middle" textLength="27.53" lengthAdjust="spacingAndGlyphs">0,808</text>
<text x="591.00" y="480" font-size="12" text-anchor="middle" textLength="27.53" lengthAdjust="spacingAndGlyphs">0,727</text>
<text x="646.00" y="480" font-size="12" text-anchor="middle" textLength="27.53" lengthAdjust="spacingAndGlyphs">0,667</text>
<text x="701.00" y="480" font-size="12" text-anchor="middle" textLength="27.53" lengthAdjust="spacingAndGlyphs">0,642</text>
<text x="756.00" y="480" font-size="12" text-anchor="middle" textLength="27.53" lengthAdjust="spacingAndGlyphs">0,786</text>
<text x="811.00" y="480" font-size="12" text-anchor="middle" textLength="27.53" lengthAdjust="spacingAndGlyphs">0,868</text>
<text x="866.00" y="480" font-size="12" text-anchor="middle" textLength="6.12" lengthAdjust="spacingAndGlyphs">1</text>
<text x="921.00" y="480" font-size="12" text-anchor="middle" textLength="6.12" lengthAdjust="spacingAndGlyphs">1</text>
<text x="91.00" y="506" font-size="11" textLength="72.80" lengthAdjust="spacingAndGlyphs">Житомирська</text>
<text x="316.00" y="506" font-size="12" text-anchor="middle" textLength="27.53" lengthAdjust="spacingAndGlyphs">1,174</text>
<text x="371.00" y="506" font-size="12" text-anchor="middle" textLength="27.53" lengthAdjust="spacingAndGlyphs">1,287</text>
<text x="426.00" y="506" font-size="12" text-anchor="middle" textLength="27.53" lengthAdjust="spacingAndGlyphs">1,296</text>
<text x="481.00" y="506" font-size="12" text-anchor="middle" textLength="27.53" lengthAdjust="spacingAndGlyphs">1,271</text>
<text x="536.00" y="506" font-size="12" text-anchor="middle" textLength="27.53" lengthAdjust="spacingAndGlyphs">0,929</text>
<text x="591.00" y="506" font-size="12" text-anchor="middle" textLength="27.53" lengthAdjust="spacingAndGlyphs">0,792</text>
<text x="646.00" y="506" font-size="12" text-anchor="middle" textLength="27.53" lengthAdjust="spacingAndGlyphs">0,614</text>
<text x="701.00" y="506" font-size="12" text-anchor="middle" textLength="6.12" lengthAdjust="spacingAndGlyphs">1</text>
<text x="756.00" y="506" font-size="12" text-anchor="middle" textLength="27.53" lengthAdjust="spacingAndGlyphs">1,226</text>
<text x="811.00" y="506" font-size="12" text-anchor="middle" textLength="6.12" lengthAdjust="spacingAndGlyphs">1</text>
<text x="866.00" y="506" font-size="12" text-anchor="middle" textLength="6.12" lengthAdjust="spacingAndGlyphs">1</text>
<text x="921.00" y="506" font-size="12" text-anchor="middle" textLength="6.12" lengthAdjust="spacingAndGlyphs">1</text>
<text x="91.00" y="532" font-size="11" textLength="72.80" lengthAdjust="spacingAndGlyphs">Закарпатська</text>
<text x="316.00" y="532" font-size="12" text-anchor="middle" textLength="27.53" lengthAdjust="spacingAndGlyphs">0,986</text>
<text x="371.00" y="532" font-size="12" text-anchor="middle" textLength="27.53" lengthAdjust="spacingAndGlyphs">0,985</text>
<text x="426.00" y="532" font-size="12" text-anchor="middle" textLength="27.53" lengthAdjust="spacingAndGlyphs">0,985</text>
<text x="481.00" y="532" font-size="12" text-anchor="middle" textLength="27.53" lengthAdjust="spacingAndGlyphs">0,984</text>
<text x="536.00" y="532" font-size="12" text-anchor="middle" textLength="27.53" lengthAdjust="spacingAndGlyphs">0,883</text>
<text x="591.00" y="532" font-size="12" text-anchor="middle" textLength="27.53" lengthAdjust="spacingAndGlyphs">0,957</text>
<text x="646.00" y="532" font-size="12" text-anchor="middle" textLength="27.53" lengthAdjust="spacingAndGlyphs">1,321</text>
<text x="701.00" y="532" font-size="12" text-anchor="middle" textLength="27.53" lengthAdjust="spacingAndGlyphs">1,758</text>
<text x="756.00" y="532" font-size="12" text-anchor="middle" textLength="6.12" lengthAdjust="spacingAndGlyphs">1</text>
<text x="811.00" y="532" font-size="12" text-anchor="middle" textLength="6.12" lengthAdjust="spacingAndGlyphs">1</text>
<text x="866.00" y="532" font-size="12" text-anchor="middle" textLength="6.12" lengthAdjust="spacingAndGlyphs">1</text>
<text x="921.00" y="532" font-size="12" text-anchor="middle" textLength="6.12" lengthAdjust="spacingAndGlyphs">1</text>
<text x="91.00" y="558" font-size="11" textLength="57.30" lengthAdjust="spacingAndGlyphs">Запорізька</text>
<text x="316.00" y="558" font-size="12" text-anchor="middle" textLength="27.53" lengthAdjust="spacingAndGlyphs">0,716</text>
<text x="371.00" y="558" font-size="12" text-anchor="middle" textLength="27.53" lengthAdjust="spacingAndGlyphs">0,557</text>
<text x="426.00" y="558" font-size="12" text-anchor="middle" textLength="27.53" lengthAdjust="spacingAndGlyphs">0,553</text>
<text x="481.00" y="558" font-size="12" text-anchor="middle" textLength="27.53" lengthAdjust="spacingAndGlyphs">0,584</text>
<text x="536.00" y="558" font-size="12" text-anchor="middle" textLength="21.41" lengthAdjust="spacingAndGlyphs">0,41</text>
<text x="591.00" y="558" font-size="12" text-anchor="middle" textLength="27.53" lengthAdjust="spacingAndGlyphs">0,372</text>
<text x="646.00" y="558" font-size="12" text-anchor="middle" textLength="27.53" lengthAdjust="spacingAndGlyphs">1,703</text>
<text x="701.00" y="558" font-size="12" text-anchor="middle" textLength="27.53" lengthAdjust="spacingAndGlyphs">0,514</text>
<text x="756.00" y="558" font-size="12" text-anchor="middle" textLength="6.12" lengthAdjust="spacingAndGlyphs">1</text>
<text x="811.00" y="558" font-size="12" text-anchor="middle" textLength="27.53" lengthAdjust="spacingAndGlyphs">0,789</text>
<text x="866.00" y="558" font-size="12" text-anchor="middle" textLength="6.12" lengthAdjust="spacingAndGlyphs">1</text>
<text x="921.00" y="558" font-size="12" text-anchor="middle" textLength="6.12" lengthAdjust="spacingAndGlyphs">1</text>
<text x="91.00" y="584" font-size="11" textLength="97.50" lengthAdjust="spacingAndGlyphs">Івано-Франківська</text>
<text x="316.00" y="584" font-size="12" text-anchor="middle" textLength="27.53" lengthAdjust="spacingAndGlyphs">0,663</text>
<text x="371.00" y="584" font-size="12" text-anchor="middle" textLength="27.53" lengthAdjust="spacingAndGlyphs">0,607</text>
<text x="426.00" y="584" font-size="12" text-anchor="middle" textLength="27.53" lengthAdjust="spacingAndGlyphs">0,536</text>
<text x="481.00" y="584" font-size="12" text-anchor="middle" textLength="27.53" lengthAdjust="spacingAndGlyphs">0,542</text>
<text x="536.00" y="584" font-size="12" text-anchor="middle" textLength="27.53" lengthAdjust="spacingAndGlyphs">0,557</text>
<text x="591.00" y="584" font-size="12" text-anchor="middle" textLength="27.53" lengthAdjust="spacingAndGlyphs">0,703</text>
<text x="646.00" y="584" font-size="12" text-anchor="middle" textLength="27.53" lengthAdjust="spacingAndGlyphs">0,997</text>
<text x="701.00" y="584" font-size="12" text-anchor="middle" textLength="27.53" lengthAdjust="spacingAndGlyphs">1,287</text>
<text x="756.00" y="584" font-size="12" text-anchor="middle" textLength="6.12" lengthAdjust="spacingAndGlyphs">1</text>
<text x="811.00" y="584" font-size="12" text-anchor="middle" textLength="6.12" lengthAdjust="spacingAndGlyphs">1</text>
<text x="866.00" y="584" font-size="12" text-anchor="middle" textLength="6.12" lengthAdjust="spacingAndGlyphs">1</text>
<text x="921.00" y="584" font-size="12" text-anchor="middle" textLength="6.12" lengthAdjust="spacingAndGlyphs">1</text>
<text x="91.00" y="610" font-size="11" textLength="46.60" lengthAdjust="spacingAndGlyphs">Київська</text>
<text x="316.00" y="610" font-size="12" text-anchor="middle" textLength="27.53" lengthAdjust="spacingAndGlyphs">1,351</text>
<text x="371.00" y="610" font-size="12" text-anchor="middle" textLength="27.53" lengthAdjust="spacingAndGlyphs">1,272</text>
<text x="426.00" y="610" font-size="12" text-anchor="middle" textLength="27.53" lengthAdjust="spacingAndGlyphs">1,298</text>
<text x="481.00" y="610" font-size="12" text-anchor="middle" textLength="27.53" lengthAdjust="spacingAndGlyphs">1,336</text>
<text x="536.00" y="610" font-size="12" text-anchor="middle" textLength="27.53" lengthAdjust="spacingAndGlyphs">1,216</text>
<text x="591.00" y="610" font-size="12" text-anchor="middle" textLength="27.53" lengthAdjust="spacingAndGlyphs">1,072</text>
<text x="646.00" y="610" font-size="12" text-anchor="middle" textLength="27.53" lengthAdjust="spacingAndGlyphs">1,142</text>
<text x="701.00" y="610" font-size="12" text-anchor="middle" textLength="27.53" lengthAdjust="spacingAndGlyphs">0,881</text>
<text x="756.00" y="610" font-size="12" text-anchor="middle" textLength="6.12" lengthAdjust="spacingAndGlyphs">1</text>
<text x="811.00" y="610" font-size="12" text-anchor="middle" textLength="6.12" lengthAdjust="spacingAndGlyphs">1</text>
<text x="866.00" y="610" font-size="12" text-anchor="middle" textLength="6.12" lengthAdjust="spacingAndGlyphs">1</text>
<text x="921.00" y="610" font-size="12" text-anchor="middle" textLength="6.12" lengthAdjust="spacingAndGlyphs">1</text>
<text x="91.00" y="636" font-size="11" textLength="80.60" lengthAdjust="spacingAndGlyphs">Кіровоградська</text>
<text x="316.00" y="636" font-size="12" text-anchor="middle" textLength="27.53" lengthAdjust="spacingAndGlyphs">0,572</text>
<text x="371.00" y="636" font-size="12" text-anchor="middle" textLength="27.53" lengthAdjust="spacingAndGlyphs">0,729</text>
<text x="426.00" y="636" font-size="12" text-anchor="middle" textLength="27.53" lengthAdjust="spacingAndGlyphs">0,753</text>
<text x="481.00" y="636" font-size="12" text-anchor="middle" textLength="27.53" lengthAdjust="spacingAndGlyphs">0,737</text>
<text x="536.00" y="636" font-size="12" text-anchor="middle" textLength="27.53" lengthAdjust="spacingAndGlyphs">0,761</text>
<text x="591.00" y="636" font-size="12" text-anchor="middle" textLength="27.53" lengthAdjust="spacingAndGlyphs">0,618</text>
<text x="646.00" y="636" font-size="12" text-anchor="middle" textLength="27.53" lengthAdjust="spacingAndGlyphs">0,859</text>
<text x="701.00" y="636" font-size="12" text-anchor="middle" textLength="27.53" lengthAdjust="spacingAndGlyphs">1,374</text>
<text x="756.00" y="636" font-size="12" text-anchor="middle" textLength="6.12" lengthAdjust="spacingAndGlyphs">1</text>
<text x="811.00" y="636" font-size="12" text-anchor="middle" textLength="6.12" lengthAdjust="spacingAndGlyphs">1</text>
<text x="866.00" y="636" font-size="12" text-anchor="middle" textLength="6.12" lengthAdjust="spacingAndGlyphs">1</text>
<text x="921.00" y="636" font-size="12" text-anchor="middle" textLength="6.12" lengthAdjust="spacingAndGlyphs">1</text>
<text x="91.00" y="662" font-size="11" textLength="54.60" lengthAdjust="spacingAndGlyphs">Луганська</text>
<text x="316.00" y="662" font-size="12" text-anchor="middle" textLength="27.53" lengthAdjust="spacingAndGlyphs">0,747</text>
<text x="371.00" y="662" font-size="12" text-anchor="middle" textLength="27.53" lengthAdjust="spacingAndGlyphs">0,758</text>
<text x="426.00" y="662" font-size="12" text-anchor="middle" textLength="27.53" lengthAdjust="spacingAndGlyphs">0,842</text>
<text x="481.00" y="662" font-size="12" text-anchor="middle" textLength="27.53" lengthAdjust="spacingAndGlyphs">0,726</text>
<text x="536.00" y="662" font-size="12" text-anchor="middle" textLength="27.53" lengthAdjust="spacingAndGlyphs">0,689</text>
<text x="591.00" y="662" font-size="12" text-anchor="middle" textLength="27.53" lengthAdjust="spacingAndGlyphs">0,675</text>
<text x="646.00" y="662" font-size="12" text-anchor="middle" textLength="27.53" lengthAdjust="spacingAndGlyphs">0,654</text>
<text x="701.00" y="662" font-size="12" text-anchor="middle" textLength="27.53" lengthAdjust="spacingAndGlyphs">0,595</text>
<text x="756.00" y="662" font-size="12" text-anchor="middle" textLength="21.41" lengthAdjust="spacingAndGlyphs">0,79</text>
<text x="811.00" y="662" font-size="12" text-anchor="middle" textLength="6.12" lengthAdjust="spacingAndGlyphs">1</text>
<text x="866.00" y="662" font-size="12" text-anchor="middle" textLength="6.12" lengthAdjust="spacingAndGlyphs">1</text>
<text x="921.00" y="662" font-size="12" text-anchor="middle" textLength="6.12" lengthAdjust="spacingAndGlyphs">1</text>
<rect x="983" y="299" width="15" height="378" fill="#f0f0f0" />
<rect x="983" y="316" width="14" height="160" fill="#cdcdcd" />
<path d="M987 311L990.5 307.5L994 311" fill="none" stroke="#555555" stroke-width="2" shape-rendering="geometricPrecision"/>
<path d="M987 667L990.5 670.5L994 667" fill="none" stroke="#555555" stroke-width="2" shape-rendering="geometricPrecision"/>
<rect x="133" y="682" width="171" height="44" fill="#ffff00" />
<rect x="135" y="684" width="167" height="40" fill="#f0f0f0" />
<text x="142.50" y="704" font-size="13" font-weight="bold" textLength="25.00" lengthAdjust="spacingAndGlyphs">Кмц</text>
<text x="167.50" y="704" font-size="13" textLength="9.00" lengthAdjust="spacingAndGlyphs">=</text>
<text x="142.50" y="717" font-size="12" textLength="25.00" lengthAdjust="spacingAndGlyphs">Kmc1</text>
<rect x="182" y="688" width="55" height="25" fill="#ffffff" />
<rect x="182" y="688" width="55" height="1" fill="#7a7a7a" />
<rect x="182" y="712" width="55" height="1" fill="#7a7a7a" />
<rect x="182" y="688" width="1" height="25" fill="#7a7a7a" />
<rect x="236" y="688" width="1" height="25" fill="#7a7a7a" />
<text x="185.50" y="705" font-size="13" font-weight="bold" textLength="32.00" lengthAdjust="spacingAndGlyphs">0,584</text>
<rect x="238" y="688" width="55" height="25" fill="#ffffa8" />
<rect x="238" y="688" width="55" height="1" fill="#7a7a7a" />
<rect x="238" y="712" width="55" height="1" fill="#7a7a7a" />
<rect x="238" y="688" width="1" height="25" fill="#7a7a7a" />
<rect x="292" y="688" width="1" height="25" fill="#7a7a7a" />
<text x="240.50" y="705" font-size="12" fill="#111" textLength="31.00" lengthAdjust="spacingAndGlyphs">0.553</text>
<rect x="919" y="689" width="73" height="23" fill="#e1e1e1" />
<rect x="919" y="689" width="73" height="1" fill="#adadad" />
<rect x="919" y="711" width="73" height="1" fill="#adadad" />
<rect x="919" y="689" width="1" height="23" fill="#adadad" />
<rect x="991" y="689" width="1" height="23" fill="#adadad" />
<text x="940.50" y="706" font-size="13" font-weight="bold" textLength="29.00" lengthAdjust="spacingAndGlyphs">Далі</text>
<rect x="61" y="738" width="954" height="1" fill="#dcdcdc" />
<rect x="1052" y="691" width="2" height="2" fill="#b8b8b8" />
<rect x="1049" y="694" width="2" height="2" fill="#b8b8b8" />
<rect x="1052" y="694" width="2" height="2" fill="#b8b8b8" />
<rect x="1046" y="697" width="2" height="2" fill="#b8b8b8" />
<rect x="1049" y="697" width="2" height="2" fill="#b8b8b8" />
<rect x="1052" y="697" width="2" height="2" fill="#b8b8b8" />
<rect x="1009" y="744" width="2" height="2" fill="#b8b8b8" />
<rect x="1006" y="747" width="2" height="2" fill="#b8b8b8" />
<rect x="1009" y="747" width="2" height="2" fill="#b8b8b8" />
<rect x="1003" y="750" width="2" height="2" fill="#b8b8b8" />
<rect x="1006" y="750" width="2" height="2" fill="#b8b8b8" />
<rect x="1009" y="750" width="2" height="2" fill="#b8b8b8" />
</svg>
</body></html>
